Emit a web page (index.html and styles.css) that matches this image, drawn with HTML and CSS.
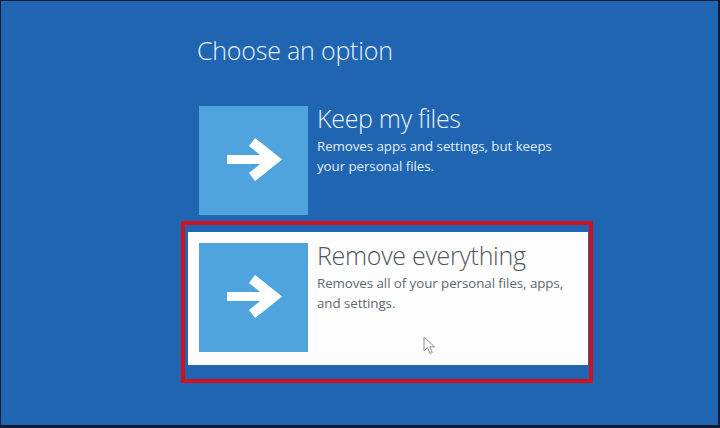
FILE: index.html
```html
<!DOCTYPE html>
<html>
<head>
<meta charset="utf-8">
<link rel="stylesheet" href="styles.css">
</head>
<body>
<div class="screen">
  <div class="column">
    <h1 class="title">Choose an option</h1>
    <div class="option">
      <div class="tile">
        <svg class="arrow" viewBox="0 0 109 109" width="109" height="109">
          <path d="M28 53.5 H72" stroke="#fff" stroke-width="9" fill="none"/>
          <path d="M53 36 L75 53.5 L53 71" stroke="#fff" stroke-width="10" fill="none" stroke-linejoin="miter" stroke-miterlimit="4"/>
        </svg>
      </div>
      <div class="text">
        <div class="opt-title">Keep my files</div>
        <div class="opt-desc">Removes apps and settings, but keeps<br>your personal files.</div>
      </div>
    </div>
    <div class="frame">
      <div class="card">
        <div class="option">
          <div class="tile">
            <svg class="arrow" viewBox="0 0 109 109" width="109" height="109">
              <path d="M28 53.5 H72" stroke="#fff" stroke-width="9" fill="none"/>
              <path d="M53 36 L75 53.5 L53 71" stroke="#fff" stroke-width="10" fill="none" stroke-linejoin="miter" stroke-miterlimit="4"/>
            </svg>
          </div>
          <div class="text">
            <div class="opt-title">Remove everything</div>
            <div class="opt-desc">Removes all of your personal files, apps,<br>and settings.</div>
          </div>
        </div>
        <svg class="cursor" viewBox="0 0 13 20" width="13" height="20">
          <path d="M1 1 L1 15 L4.5 11.5 L7 17.5 L9.2 16.5 L6.8 10.8 L11.5 10.8 Z" fill="#fff" stroke="#8a8f96" stroke-width="1" stroke-linejoin="round"/>
        </svg>
      </div>
    </div>
  </div>
</div>
</body>
</html>
```

FILE: styles.css
```css
html, body {
  margin: 0;
  padding: 0;
}
body {
  width: 720px;
  height: 428px;
  overflow: hidden;
  font-family: "Open Sans", "Noto Sans", sans-serif;
}
.screen {
  box-sizing: border-box;
  width: 720px;
  height: 428px;
  background: #1f65b1;
  border-style: solid;
  border-color: #0f1c35;
  border-width: 1px 2px 3px 1px;
  padding: 0 0 0 198px;
}
.column {
  display: flex;
  flex-direction: column;
  align-items: flex-start;
}
.title {
  margin: 34px 0 0 -2px;
  font-size: 25px;
  font-weight: 300;
  line-height: 31px;
  color: #e9f1fb;
  letter-spacing: -0.2px;
}
.option {
  display: flex;
  gap: 9px;
}
.column > .option {
  margin-top: 40px;
}
.tile {
  width: 109px;
  height: 109px;
  background: #4fa4dd;
  flex: none;
}
.arrow {
  display: block;
}
.text {
  display: flex;
  flex-direction: column;
}
.opt-title {
  font-size: 25px;
  font-weight: 300;
  line-height: 28px;
  color: #eaf2fb;
  margin-top: -2px;
  letter-spacing: -0.3px;
}
.opt-desc {
  font-size: 13.3px;
  line-height: 20px;
  color: #e3edf8;
  margin-top: 4px;
  letter-spacing: -0.05px;
}
.frame {
  margin: 6px 0 0 -18px;
  border: 4px solid #d0121f;
  padding: 7px 1px 14px 3px;
}
.card {
  position: relative;
  width: 400px;
  box-sizing: border-box;
  background: #fdfdfd;
  padding: 11px 11px 13px 11px;
}
.card .opt-title {
  color: #51565d;
}
.card .opt-desc {
  color: #5d6773;
}
.cursor {
  position: absolute;
  left: 235px;
  top: 104px;
}
```
